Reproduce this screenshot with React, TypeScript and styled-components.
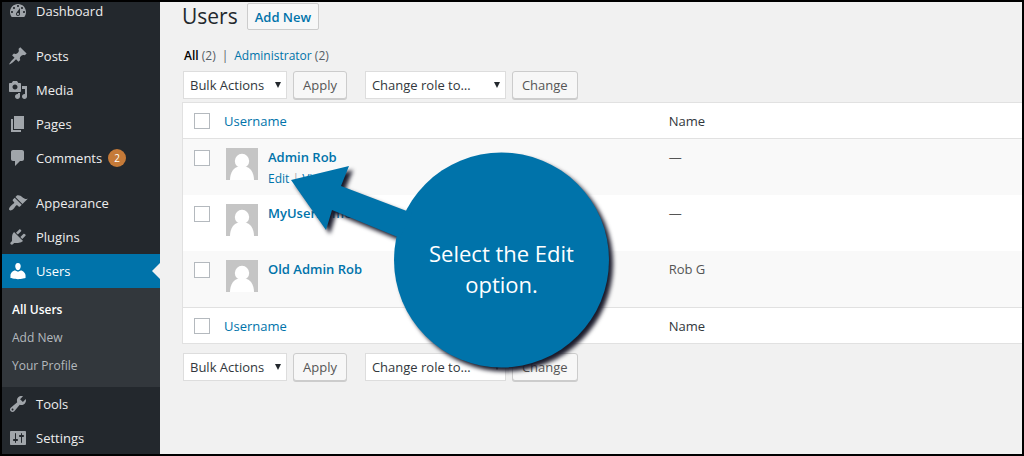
import React from "react";
import styled, { createGlobalStyle, css } from "styled-components";

const GlobalStyle = createGlobalStyle`
  *, *::before, *::after { box-sizing: border-box; }
  body {
    margin: 0;
    background: #f1f1f1;
    color: #32373c;
    font: 13px/20px "Open Sans", "Noto Sans", sans-serif;
  }
  a { color: #0073aa; text-decoration: none; }
  h1, p, ul { margin: 0; padding: 0; }
  ul { list-style: none; }
`;

const Frame = styled.div`
  display: grid;
  grid-template-columns: 158px minmax(0, 1fr);
  min-height: 100vh;
  border: 2px solid #000;
  overflow: hidden;
`;

const Sidebar = styled.nav`
  background: #23282d;
`;

const Menu = styled.ul`
  margin: -8px 0 -1px;
`;

const MenuItem = styled.li<{ $spaced?: boolean }>`
  margin-top: ${(p) => (p.$spaced ? "11px" : "0")};
`;

const MenuLink = styled.a<{ $current?: boolean }>`
  display: flex;
  align-items: center;
  gap: 8px;
  height: 34px;
  padding-left: 6px;
  color: #eee;
  font-size: 13px;
  ${(p) =>
    p.$current &&
    css`
      color: #fff;
      background: #0073aa;
      &::after {
        content: "";
        margin-left: auto;
        border: 8px solid transparent;
        border-right-color: #f1f1f1;
        border-left-width: 0;
      }
    `}
`;

const MenuIcon = styled.svg<{ $current?: boolean }>`
  width: 20px;
  height: 20px;
  flex: none;
  fill: ${(p) => (p.$current ? "#fff" : "#a0a5aa")};
`;

const Count = styled.span`
  width: 18px;
  height: 18px;
  margin-left: -2px;
  border-radius: 50%;
  background: #c57a38;
  color: #fff;
  font-size: 10px;
  line-height: 18px;
  text-align: center;
`;

const SubMenu = styled.ul`
  padding: 8px 0 7px;
  background: #32373c;
`;

const SubLink = styled.a<{ $current?: boolean }>`
  display: block;
  padding-left: 10px;
  font-size: 12px;
  line-height: 28px;
  color: ${(p) => (p.$current ? "#fff" : "#b4b9be")};
  font-weight: ${(p) => (p.$current ? 600 : 400)};
`;

const Main = styled.main`
  position: relative;
  padding: 1px 0 20px 22px;
  background: #f1f1f1;
`;

const Heading = styled.header`
  display: flex;
  align-items: center;
  gap: 9px;
  height: 27px;
`;

const Title = styled.h1`
  font-size: 21px;
  font-weight: 400;
  line-height: 27px;
  color: #23282d;
`;

const TitleAction = styled.a`
  height: 27px;
  padding: 0 7px;
  border: 1px solid #ccc;
  border-radius: 2px;
  background: #f7f7f7;
  font-size: 13px;
  font-weight: 600;
  line-height: 26px;
`;

const Filters = styled.ul`
  display: flex;
  gap: 6px;
  margin: 16px 0 5px;
  padding-left: 2px;
  font-size: 12px;
  color: #555d66;
`;

const FilterLink = styled.a<{ $current?: boolean }>`
  color: ${(p) => (p.$current ? "#000" : "#0073aa")};
  font-weight: ${(p) => (p.$current ? 600 : 400)};
`;

const Toolbar = styled.form`
  display: flex;
  gap: 18px;
  padding-left: 1px;
`;

const Group = styled.div`
  display: flex;
  gap: 6px;
`;

const SelectBox = styled.label<{ $wide?: boolean }>`
  display: grid;
  grid-template-areas: "box";
  align-items: center;
  justify-items: end;
  width: ${(p) => (p.$wide ? "141px" : "104px")};
  height: 28px;
`;

const Select = styled.select`
  grid-area: box;
  width: 100%;
  height: 28px;
  padding: 0 6px;
  border: 1px solid #ddd;
  border-radius: 0;
  background: #fff;
  color: #32373c;
  font: inherit;
  appearance: none;
`;

const Arrow = styled.svg`
  grid-area: box;
  width: 6px;
  height: 6px;
  margin-right: 6px;
  fill: #23282d;
  pointer-events: none;
`;

const Button = styled.button`
  height: 28px;
  padding: 0 9px;
  border: 1px solid #ccc;
  border-radius: 3px;
  background: #f7f7f7;
  box-shadow: 0 1px 0 #ccc;
  color: #555;
  font: inherit;
`;

const Table = styled.table`
  width: 100%;
  margin: 3px 0 9px;
  border: 1px solid #e1e1e1;
  border-right: 0;
  border-collapse: separate;
  border-spacing: 0;
  table-layout: fixed;
  background: #fff;
`;

const CheckCol = styled.col`
  width: 33px;
`;

const UserCol = styled.col`
  width: 53%;
`;

const HeadCell = styled.th<{ $foot?: boolean }>`
  height: 36px;
  padding: 0 8px;
  border: 0 solid #e1e1e1;
  border-width: ${(p) => (p.$foot ? "1px 0 0" : "0 0 1px")};
  font-weight: 400;
  text-align: left;
  color: #32373c;
`;

const HeadCheck = styled(HeadCell)`
  padding: 0 0 0 11px;
`;

const Row = styled.tr`
  &:nth-child(odd) { background: #f9f9f9; }
`;

const Cell = styled.td`
  height: 56px;
  padding: 9px 8px 7px;
  vertical-align: top;
  line-height: 18px;
  color: #555;
`;

const CheckCell = styled(Cell)`
  padding: 11px 0 0 11px;
`;

const Check = styled.input`
  display: block;
  width: 16px;
  height: 16px;
  margin: 0;
  border: 1px solid #b4b9be;
  background: #fff;
  appearance: none;
`;

const User = styled.div`
  display: flex;
  gap: 10px;
  padding-left: 2px;
`;

const Avatar = styled.svg`
  width: 32px;
  height: 32px;
  flex: none;
`;

const UserText = styled.div`
  display: grid;
  gap: 4px;
`;

const UserName = styled.a`
  font-weight: 600;
`;

const Actions = styled.span`
  font-size: 12px;
  color: #aaa;
`;

const Callout = styled.aside`
  position: absolute;
  left: 126px;
  top: 146px;
  width: 330px;
  height: 240px;
  pointer-events: none;
`;

const Bubble = styled.svg`
  display: block;
  width: 330px;
  height: 240px;
  fill: #0073aa;
  filter: drop-shadow(4px 4px 2px #1a1a2a);
`;

const CalloutText = styled.p`
  position: absolute;
  left: 108px;
  top: 90px;
  width: 215px;
  color: #fff;
  font-size: 22px;
  line-height: 31px;
  text-align: center;
`;

const icons = {
  dashboard:
    "M3.76 16h12.48c1.1-1.37 1.76-3.11 1.76-5 0-4.42-3.58-8-8-8s-8 3.58-8 8c0 1.89.66 3.63 1.76 5zM10 4c.55 0 1 .45 1 1s-.45 1-1 1-1-.45-1-1 .45-1 1-1zM6 6c.55 0 1 .45 1 1s-.45 1-1 1-1-.45-1-1 .45-1 1-1zm8 0c.55 0 1 .45 1 1s-.45 1-1 1-1-.45-1-1 .45-1 1-1zm-5.37 5.55L12 7v6c0 1.1-.9 2-2 2s-2-.9-2-2c0-.57.24-1.08.63-1.45zM4 10c.55 0 1 .45 1 1s-.45 1-1 1-1-.45-1-1 .45-1 1-1zm12 0c.55 0 1 .45 1 1s-.45 1-1 1-1-.45-1-1 .45-1 1-1zm-5 3c0-.55-.45-1-1-1s-1 .45-1 1 .45 1 1 1 1-.45 1-1z",
  posts:
    "M10.44 3.02l1.82-1.82 6.36 6.35-1.83 1.82c-1.05-.68-2.48-.57-3.41.36l-.75.75c-.92.93-1.04 2.35-.35 3.41l-1.83 1.82-2.41-2.41-2.8 2.79c-.42.42-3.38 2.71-3.8 2.29s1.86-3.39 2.28-3.81l2.79-2.79L4.1 9.36l1.83-1.82c1.05.69 2.48.57 3.4-.36l.75-.75c.93-.92 1.05-2.35.36-3.41z",
  media:
    "M13 11V4c0-.55-.45-1-1-1h-1.67L9 1H5L3.67 3H2c-.55 0-1 .45-1 1v7c0 .55.45 1 1 1h10c.55 0 1-.45 1-1zM7 4.5c1.38 0 2.5 1.12 2.5 2.5S8.38 9.5 7 9.5 4.5 8.38 4.5 7 5.62 4.5 7 4.5zM14 6h5v10.5c0 1.38-1.12 2.5-2.5 2.5S14 17.88 14 16.5s1.12-2.5 2.5-2.5c.17 0 .34.02.5.05V9h-3V6zm-4 8.05V13h2v3.5c0 1.38-1.12 2.5-2.5 2.5S7 17.88 7 16.5 8.12 14 9.5 14c.17 0 .34.02.5.05z",
  pages: "M6 15V2h10v13H6zm-1 1h8v2H3V5h2v11z",
  comments:
    "M5 2h9c1.1 0 2 .9 2 2v7c0 1.1-.9 2-2 2h-2l-5 5v-5H5c-1.1 0-2-.9-2-2V4c0-1.1.9-2 2-2z",
  appearance:
    "M14.48 11.06L7.41 3.99l1.5-1.5c.5-.56 2.3-.47 3.51.32 1.21.8 1.43 1.28 2.91 2.1 1.18.64 2.45 1.26 4.45.85zm-.71.71L6.7 4.7 4.93 6.47c-.39.39-.39 1.02 0 1.41l1.06 1.06c.39.39.39 1.03 0 1.42-.6.6-1.43 1.11-2.21 1.69-.35.26-.7.53-1.01.84C1.43 14.23.4 16.08 1.4 17.07c.99 1 2.84-.03 4.18-1.36.31-.31.58-.66.85-1.02.57-.78 1.08-1.61 1.69-2.21.39-.39 1.02-.39 1.41 0l1.06 1.06c.39.39 1.02.39 1.41 0z",
  plugins:
    "M13.11 4.36L9.87 7.6 8 5.73l3.24-3.24c.35-.34 1.05-.2 1.56.32.52.51.66 1.21.31 1.55zm-8 1.77l.91-1.12 9.01 9.01-1.19.84c-.71.71-2.63 1.16-3.82 1.16H6.14L4.9 17.26c-.59.59-1.54.59-2.12 0-.59-.58-.59-1.53 0-2.12l1.24-1.24v-3.88c0-1.13.4-3.19 1.09-3.89zm7.26 3.97l3.24-3.24c.34-.35 1.04-.21 1.55.31.52.51.66 1.21.31 1.55l-3.24 3.25z",
  users:
    "M10 9.25c-2.27 0-2.73-3.44-2.73-3.44C7 4.02 7.82 2 9.97 2c2.16 0 2.98 2.02 2.71 3.81 0 0-.41 3.44-2.68 3.44zm0 1.55L12.72 9.6c2.39 0 4.82 2.73 4.82 4.93v2.49s-3.95 1.13-7.54 1.13c-3.65 0-7.54-1.13-7.54-1.13v-2.49c0-2.25 2.24-4.93 4.77-4.93z",
  tools:
    "M16.68 9.77c-1.34 1.34-3.3 1.67-4.95.99l-5.41 6.52c-.99.99-2.59.99-3.58 0s-.99-2.59 0-3.57l6.52-5.42c-.68-1.65-.35-3.61.99-4.95 1.28-1.28 3.12-1.62 4.72-1.06l-2.89 2.89 2.82 2.82 2.86-2.87c.53 1.58.18 3.39-1.08 4.65zM3.81 16.21c.4.39 1.04.39 1.43 0 .4-.4.4-1.04 0-1.43-.39-.4-1.03-.4-1.43 0-.39.39-.39 1.03 0 1.43z",
  settings:
    "M18 16V4c0-.55-.45-1-1-1H3c-.55 0-1 .45-1 1v12c0 .55.45 1 1 1h14c.55 0 1-.45 1-1zM8 11h1c.55 0 1 .45 1 1s-.45 1-1 1H8v1.5c0 .28-.22.5-.5.5s-.5-.22-.5-.5V13H6c-.55 0-1-.45-1-1s.45-1 1-1h1V5.5c0-.28.22-.5.5-.5s.5.22.5.5V11zm5-2h-1c-.55 0-1-.45-1-1s.45-1 1-1h1V5.5c0-.28.22-.5.5-.5s.5.22.5.5V7h1c.55 0 1 .45 1 1s-.45 1-1 1h-1v5.5c0 .28-.22.5-.5.5s-.5-.22-.5-.5V9z",
};

type Entry = {
  icon: keyof typeof icons;
  label: string;
  spaced?: boolean;
  count?: number;
  children?: string[];
};

const menu: Entry[] = [
  { icon: "dashboard", label: "Dashboard" },
  { icon: "posts", label: "Posts", spaced: true },
  { icon: "media", label: "Media" },
  { icon: "pages", label: "Pages" },
  { icon: "comments", label: "Comments", count: 2 },
  { icon: "appearance", label: "Appearance", spaced: true },
  { icon: "plugins", label: "Plugins" },
  { icon: "users", label: "Users", children: ["All Users", "Add New", "Your Profile"] },
  { icon: "tools", label: "Tools" },
  { icon: "settings", label: "Settings" },
];

const users = [
  { login: "Admin Rob", name: "—", actions: true },
  { login: "MyUsername", name: "—" },
  { login: "Old Admin Rob", name: "Rob G" },
];

function DropDown({ label, wide }: { label: string; wide?: boolean }) {
  return (
    <SelectBox $wide={wide}>
      <Select aria-label={label}>
        <option>{label}</option>
      </Select>
      <Arrow viewBox="0 0 6 6" aria-hidden="true">
        <path d="M0 0h6L3 6z" />
      </Arrow>
    </SelectBox>
  );
}

function BulkBar() {
  return (
    <Toolbar>
      <Group>
        <DropDown label="Bulk Actions" />
        <Button type="button">Apply</Button>
      </Group>
      <Group>
        <DropDown label="Change role to…" wide />
        <Button type="button">Change</Button>
      </Group>
    </Toolbar>
  );
}

function HeadRow({ foot }: { foot?: boolean }) {
  return (
    <tr>
      <HeadCheck $foot={foot}>
        <Check type="checkbox" aria-label="Select all" />
      </HeadCheck>
      <HeadCell $foot={foot}>
        <a href="#username">Username</a>
      </HeadCell>
      <HeadCell $foot={foot}>Name</HeadCell>
    </tr>
  );
}

export default function App() {
  return (
    <>
      <GlobalStyle />
      <Frame>
        <Sidebar>
          <Menu>
            {menu.map((item) => (
              <MenuItem key={item.label} $spaced={item.spaced}>
                <MenuLink href="#menu" $current={!!item.children}>
                  <MenuIcon viewBox="0 0 20 20" $current={!!item.children} aria-hidden="true">
                    <path d={icons[item.icon]} />
                  </MenuIcon>
                  {item.label}
                  {item.count && <Count>{item.count}</Count>}
                </MenuLink>
                {item.children && (
                  <SubMenu>
                    {item.children.map((label, i) => (
                      <li key={label}>
                        <SubLink href="#submenu" $current={i === 0}>
                          {label}
                        </SubLink>
                      </li>
                    ))}
                  </SubMenu>
                )}
              </MenuItem>
            ))}
          </Menu>
        </Sidebar>
        <Main>
          <Heading>
            <Title>Users</Title>
            <TitleAction href="#new">Add New</TitleAction>
          </Heading>
          <Filters>
            <li>
              <FilterLink href="#all" $current>All</FilterLink> (2)
            </li>
            <li>|</li>
            <li>
              <FilterLink href="#admins">Administrator</FilterLink> (2)
            </li>
          </Filters>
          <BulkBar />
          <Table>
            <colgroup>
              <CheckCol />
              <UserCol />
              <col />
            </colgroup>
            <thead>
              <HeadRow />
            </thead>
            <tbody>
              {users.map((user) => (
                <Row key={user.login}>
                  <CheckCell>
                    <Check type="checkbox" aria-label={`Select ${user.login}`} />
                  </CheckCell>
                  <Cell>
                    <User>
                      <Avatar viewBox="0 0 32 32" aria-hidden="true">
                        <path fill="#c5c5c5" d="M0 0h32v32H0z" />
                        <circle cx="16" cy="13" r="7.2" fill="#fff" />
                        <path fill="#fff" d="M4 32C4 24.500 8 18.800 13 18.800h6c5 0 9 5.700 9 13.200z" />
                      </Avatar>
                      <UserText>
                        <UserName href="#user">{user.login}</UserName>
                        {user.actions && (
                          <Actions>
                            <a href="#edit">Edit</a> | <a href="#view">View</a>
                          </Actions>
                        )}
                      </UserText>
                    </User>
                  </Cell>
                  <Cell>{user.name}</Cell>
                </Row>
              ))}
            </tbody>
            <tfoot>
              <HeadRow foot />
            </tfoot>
          </Table>
          <BulkBar />
          <Callout>
            <Bubble viewBox="286 148 330 240" aria-hidden="true">
              <circle cx="501.500" cy="260" r="107.500" />
              <path d="M291 180L349 166L341 186L412 213L400 238L332 210L326 230z" />
            </Bubble>
            <CalloutText>
              Select the Edit
              <br />
              option.
            </CalloutText>
          </Callout>
        </Main>
      </Frame>
    </>
  );
}
